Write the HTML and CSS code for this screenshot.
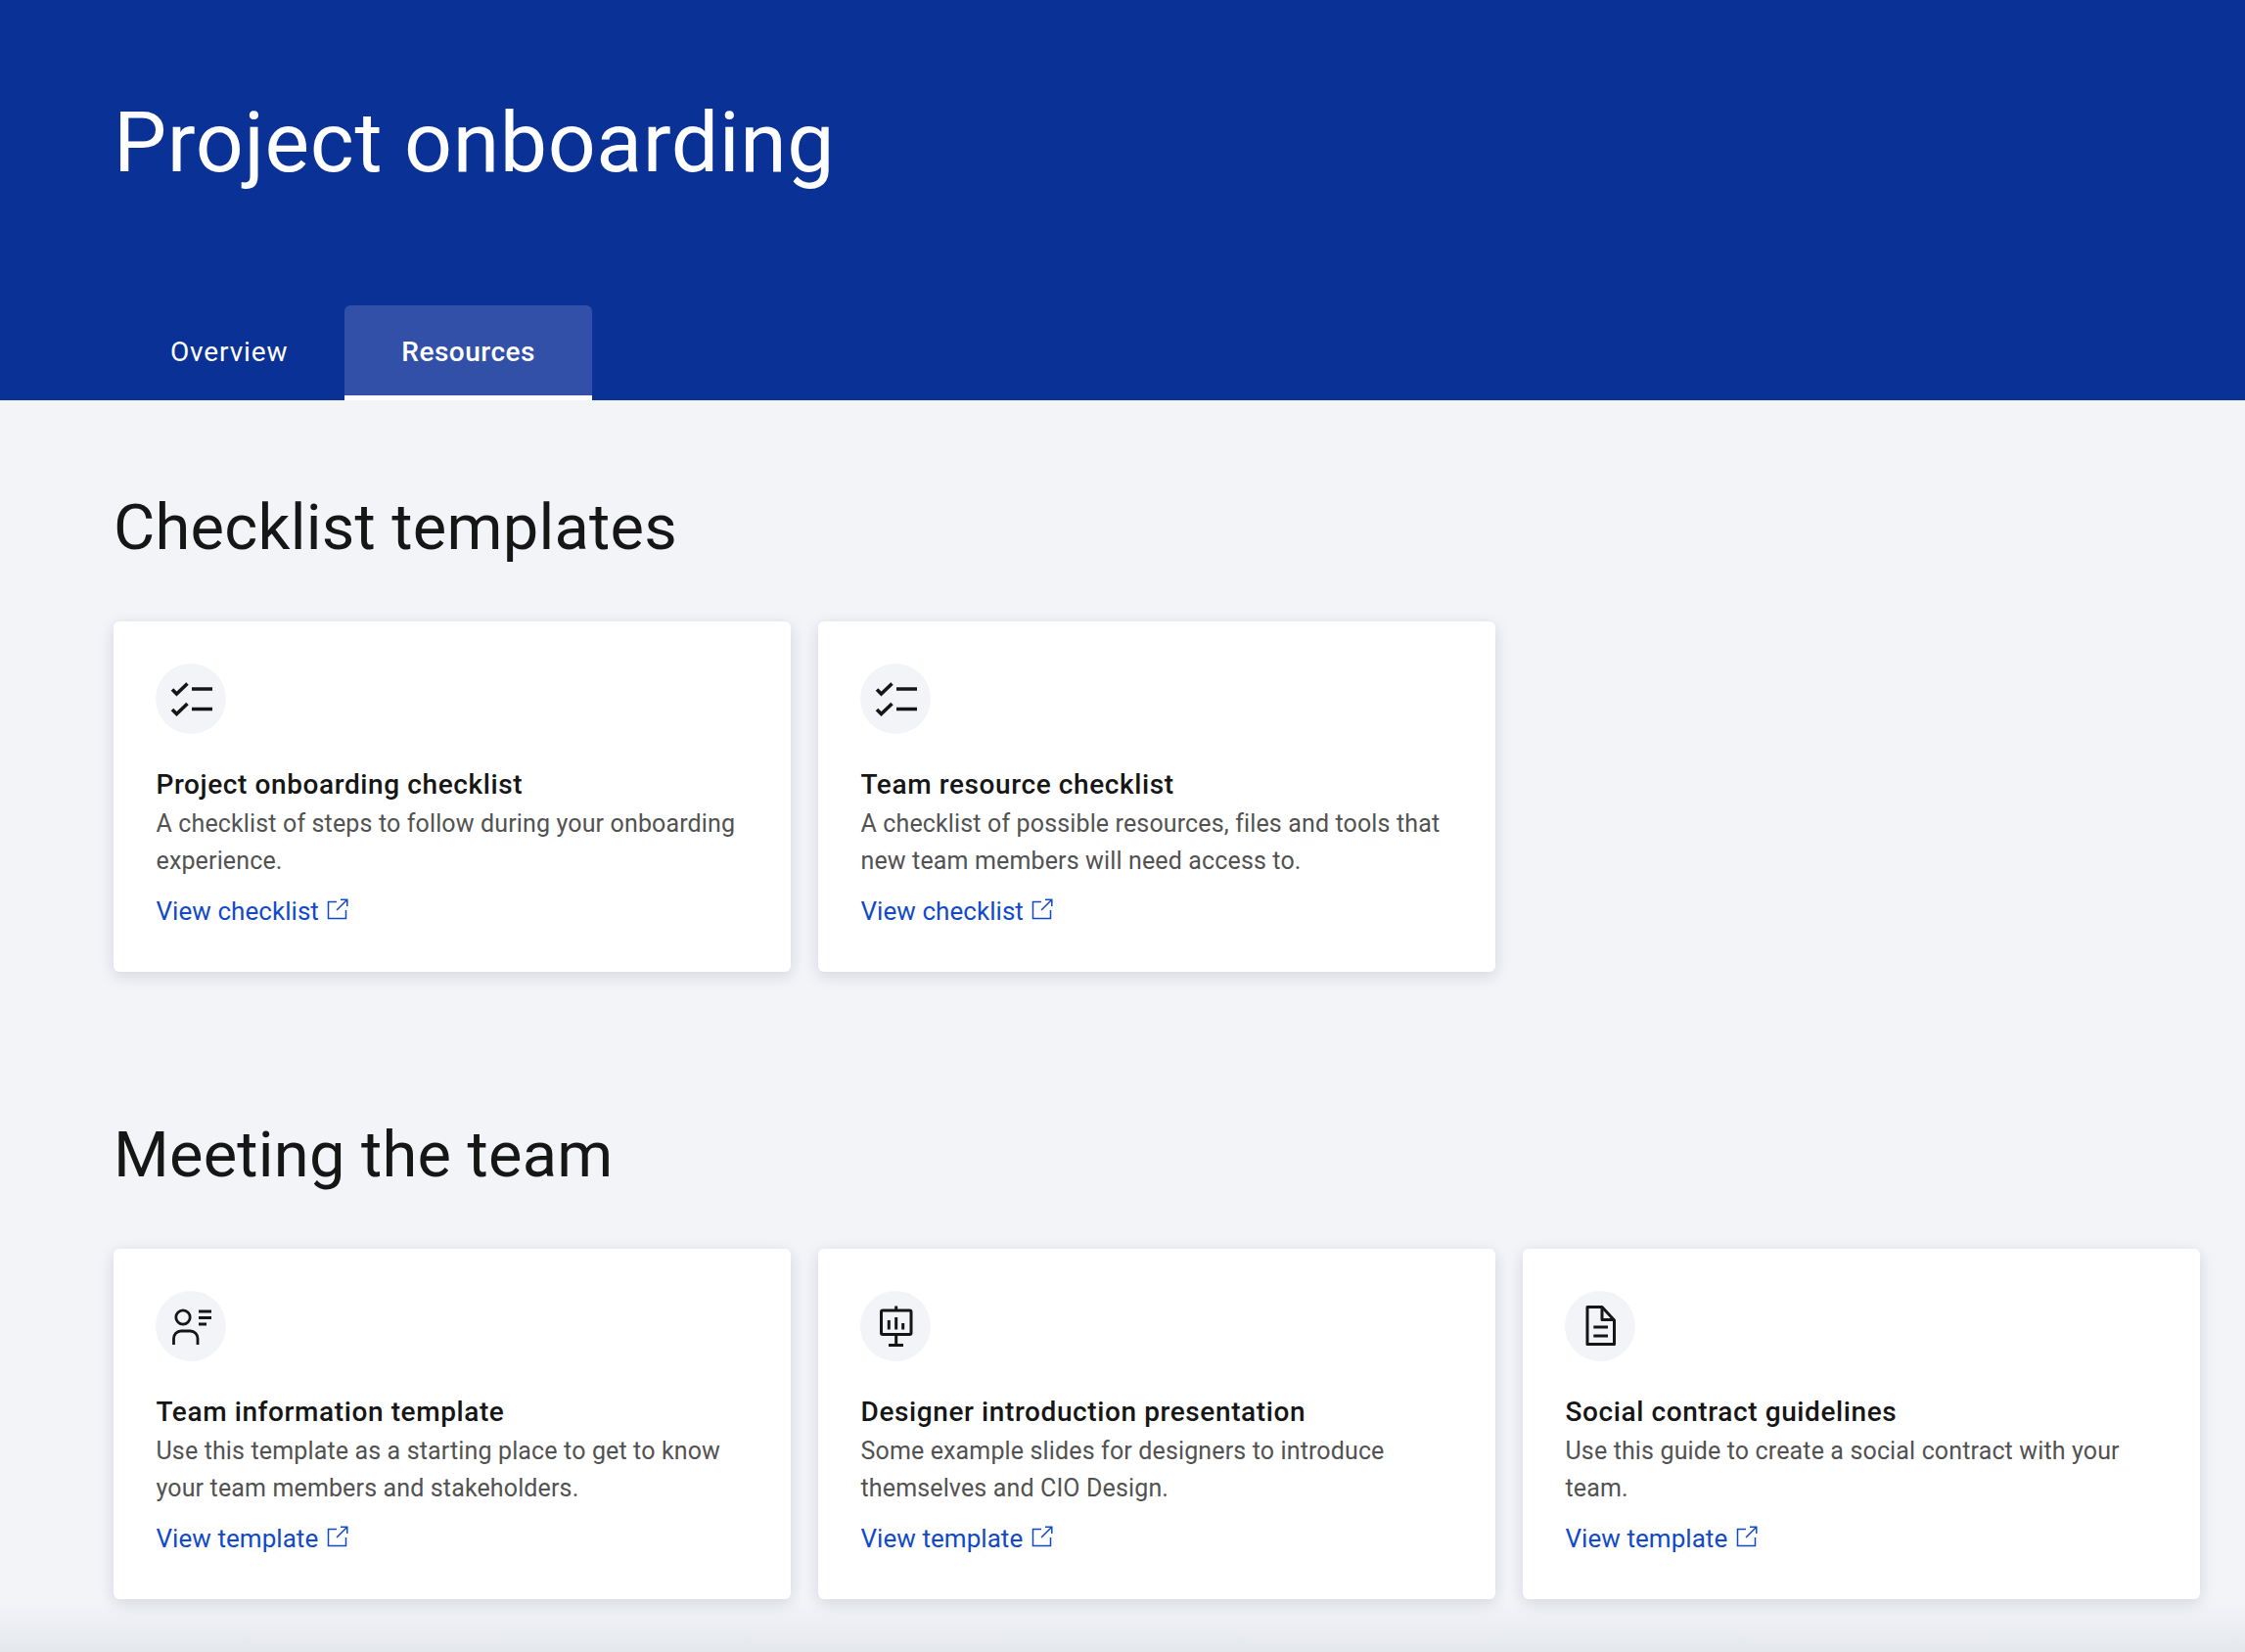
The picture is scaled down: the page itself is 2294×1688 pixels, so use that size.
FILE: index.html
```html
<!DOCTYPE html>
<html lang="en">
<head>
<meta charset="utf-8">
<title>Project onboarding</title>
<link rel="stylesheet" href="styles.css">
</head>
<body>
<svg class="defs" width="0" height="0" aria-hidden="true">
  <symbol id="ext" viewBox="0 0 22 22">
    <path d="M10 3.5H1.5V20.5H19.5V12" fill="none" stroke="currentColor" stroke-width="1.5"/>
    <path d="M10 12L20.5 1.5M14 1.2H20.8V8" fill="none" stroke="currentColor" stroke-width="1.5"/>
  </symbol>
  <symbol id="check" viewBox="0 0 72 72">
    <g fill="none" stroke="#161616" stroke-width="3.6">
      <path d="M17 26.5L21.5 31L32.5 20.5M37 26H58"/>
      <path d="M17 47L21.5 51.5L32.5 41M37 46.5H58"/>
    </g>
  </symbol>
</svg>
<header class="hero">
  <h1 class="hero-title">Project onboarding</h1>
  <nav class="tabs">
    <a class="tab">Overview</a>
    <a class="tab tab-active">Resources</a>
  </nav>
</header>
<main class="content">
  <section class="section">
    <h2 class="section-title">Checklist templates</h2>
    <div class="cards">
      <article class="card">
        <div class="badge"><svg class="badge-icon"><use href="#check"/></svg></div>
        <h3 class="card-title">Project onboarding checklist</h3>
        <p class="card-text">A checklist of steps to follow during your onboarding experience.</p>
        <a class="card-link">View checklist<svg class="ext"><use href="#ext"/></svg></a>
      </article>
      <article class="card">
        <div class="badge"><svg class="badge-icon"><use href="#check"/></svg></div>
        <h3 class="card-title">Team resource checklist</h3>
        <p class="card-text">A checklist of possible resources, files and tools that new team members will need access to.</p>
        <a class="card-link">View checklist<svg class="ext"><use href="#ext"/></svg></a>
      </article>
    </div>
  </section>
  <section class="section section-second">
    <h2 class="section-title">Meeting the team</h2>
    <div class="cards">
      <article class="card">
        <div class="badge">
          <svg class="badge-icon" viewBox="0 0 72 72"><g fill="none" stroke="#161616" stroke-width="2.8">
            <circle cx="28" cy="27" r="7.2"/>
            <path d="M18.5 55V48.5a7.5 7.5 0 0 1 7.5-7.5h9.5a7.5 7.5 0 0 1 7.5 7.5V55"/>
            <path d="M44 21H57M44 27.5H57M44 34H52"/>
          </g></svg>
        </div>
        <h3 class="card-title">Team information template</h3>
        <p class="card-text">Use this template as a starting place to get to know your team members and stakeholders.</p>
        <a class="card-link">View template<svg class="ext"><use href="#ext"/></svg></a>
      </article>
      <article class="card">
        <div class="badge">
          <svg class="badge-icon" viewBox="0 0 72 72"><g fill="none" stroke="#161616" stroke-width="3">
            <rect x="21.5" y="20" width="30.5" height="24.5" rx="1.5"/>
            <path d="M36.7 15.5V20M36.7 44.5V55M29 55.5H44"/>
            <path d="M29.3 30V39.5M36.7 27V39.5M43.7 33V39.5"/>
          </g></svg>
        </div>
        <h3 class="card-title">Designer introduction presentation</h3>
        <p class="card-text">Some example slides for designers to introduce themselves and CIO Design.</p>
        <a class="card-link">View template<svg class="ext"><use href="#ext"/></svg></a>
      </article>
      <article class="card">
        <div class="badge">
          <svg class="badge-icon" viewBox="0 0 72 72"><g fill="none" stroke="#161616" stroke-width="3" stroke-linejoin="round">
            <path d="M24.5 16.5H38L50.5 30V54.5H23V16.5Z"/>
            <path d="M38 16.5V29.5H50.5"/>
            <path d="M29.3 37H44M29.3 46H44"/>
          </g></svg>
        </div>
        <h3 class="card-title">Social contract guidelines</h3>
        <p class="card-text">Use this guide to create a social contract with your team.</p>
        <a class="card-link">View template<svg class="ext"><use href="#ext"/></svg></a>
      </article>
    </div>
  </section>
</main>
<div class="footer-fade"></div>
</body>
</html>
```
FILE: styles.css
```css
* { box-sizing: border-box; }
html, body { margin: 0; padding: 0; }
body {
  height: 1688px;
  overflow: hidden;
  background: #f2f4f8;
  color: #161616;
  font-family: Roboto, "Liberation Sans", sans-serif;
  position: relative;
}
.defs { display: block; height: 0; }
.hero {
  height: 409px;
  background: #0a3196;
  padding: 93px 0 0 116px;
  display: flex;
  flex-direction: column;
  justify-content: space-between;
  color: #fff;
}
.hero-title {
  margin: 0;
  font-size: 86px;
  line-height: 106px;
  font-weight: 400;
  letter-spacing: .6px;
}
.tabs { display: flex; height: 97px; }
.tab {
  padding: 30px 58px 0;
  font-size: 28px;
  line-height: 36px;
  font-weight: 400;
  letter-spacing: .85px;
}
.tab-active {
  background: #3350a8;
  border-bottom: 5px solid #fff;
  border-radius: 6px 6px 0 0;
  font-weight: 500;
  letter-spacing: .5px;
}
.content { padding: 0 46px 0 116px; }
.section { padding-top: 91px; }
.section-second { padding-top: 148px; }
.section-title {
  margin: 0 0 57px;
  font-size: 65px;
  line-height: 78px;
  font-weight: 400;
  letter-spacing: .22px;
}
.cards {
  display: grid;
  grid-template-columns: repeat(3, 692px);
  column-gap: 28px;
}
.card {
  background: #fff;
  border-radius: 6px;
  padding: 43px 44px 43px 43.5px;
  box-shadow: 0 4px 16px rgba(20, 30, 60, .14);
}
.badge {
  width: 72px;
  height: 72px;
  margin-left: -.5px;
  border-radius: 50%;
  background: #f2f4f8;
}
.badge-icon { display: block; width: 72px; height: 72px; }
.card-title {
  margin: 33px 0 0;
  font-size: 28px;
  line-height: 38px;
  font-weight: 500;
  letter-spacing: .6px;
}
.card-text {
  margin: 2px 0 0;
  font-size: 25px;
  line-height: 38px;
  font-weight: 400;
  color: #525252;
  letter-spacing: .14px;
}
.card-link {
  display: flex;
  align-items: center;
  margin-top: 13px;
  height: 38px;
  font-size: 26px;
  color: #1249c7;
  letter-spacing: .05px;
}
.ext { width: 22px; height: 22px; margin: -4px 0 0 8.5px; color: #1249c7; }
.footer-fade {
  position: absolute;
  left: 0;
  right: 0;
  bottom: 0;
  height: 52px;
  background: linear-gradient(rgba(20, 30, 60, 0), rgba(20, 30, 60, .06));
  pointer-events: none;
}
```
